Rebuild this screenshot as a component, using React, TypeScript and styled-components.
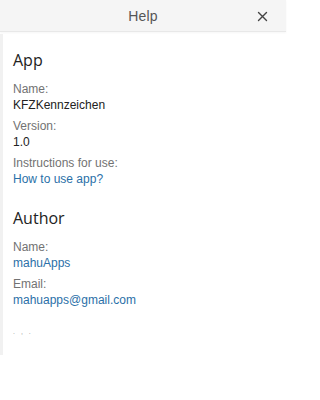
import React from 'react';
import styled, { createGlobalStyle } from 'styled-components';

const GlobalStyle = createGlobalStyle`
  html, body {
    margin: 0;
    padding: 0;
    background: #ffffff;
    font-family: "Liberation Sans", Arial, sans-serif;
    overflow-x: hidden;
  }
`;

const Screen = styled.div`
  width: 286px;
`;

const Header = styled.header`
  height: 32px;
  background: #f5f5f5;
  border-bottom: 1px solid #e8e8e8;
  box-shadow: 0 1px 2px rgba(0, 0, 0, 0.04);
  display: flex;
  align-items: center;
  justify-content: center;
  position: relative;
  box-sizing: border-box;
`;

const Title = styled.h1`
  margin: 0;
  font-size: 14px;
  font-weight: normal;
  color: #555555;
  letter-spacing: 0.2px;
`;

const CloseButton = styled.button`
  position: absolute;
  right: 16px;
  top: 7px;
  border: none;
  background: transparent;
  padding: 0;
  width: 16px;
  height: 18px;
  display: flex;
  align-items: center;
  justify-content: center;
  cursor: pointer;
`;

const Content = styled.main`
  margin-top: 2px;
  min-height: 321px;
  border-left: 3px solid #f1f1f1;
  background: #ffffff;
  padding: 14px 10px 0 10px;
  box-sizing: border-box;
`;

const Section = styled.section<{ first?: boolean }>`
  margin-top: ${({ first }) => (first ? '0' : '19px')};
  display: flex;
  flex-direction: column;
  gap: 5px;
`;

const Heading = styled.h2`
  margin: 0 0 4px 0;
  font-family: "Open Sans", "Liberation Sans", sans-serif;
  font-size: 16px;
  line-height: 24px;
  font-weight: normal;
  color: #222222;
`;

const Field = styled.div`
  display: flex;
  flex-direction: column;
`;

const Label = styled.span`
  font-size: 12px;
  line-height: 16px;
  color: #727272;
`;

const Value = styled.span`
  font-size: 12px;
  line-height: 16px;
  color: #222222;
`;

const Link = styled.a`
  font-size: 12px;
  line-height: 16px;
  color: #2a70a8;
  text-decoration: none;
`;

const Footnote = styled.div`
  margin-top: 20px;
  font-size: 7px;
  color: #9a9a9a;
  letter-spacing: 2px;
`;

const CloseIcon = () => (
  <svg width="11" height="11" viewBox="0 0 11 11">
    <path d="M1.5 1.5 L9.5 9.5 M9.5 1.5 L1.5 9.5" stroke="#444" strokeWidth="1.4" strokeLinecap="round" />
  </svg>
);

export default function App() {
  return (
    <Screen>
      <GlobalStyle />
      <Header>
        <Title>Help</Title>
        <CloseButton aria-label="Close">
          <CloseIcon />
        </CloseButton>
      </Header>
      <Content>
        <Section first>
          <Heading>App</Heading>
          <Field>
            <Label>Name:</Label>
            <Value>KFZKennzeichen</Value>
          </Field>
          <Field>
            <Label>Version:</Label>
            <Value>1.0</Value>
          </Field>
          <Field>
            <Label>Instructions for use:</Label>
            <Link href="#">How to use app?</Link>
          </Field>
        </Section>
        <Section>
          <Heading>Author</Heading>
          <Field>
            <Label>Name:</Label>
            <Link href="#">mahuApps</Link>
          </Field>
          <Field>
            <Label>Email:</Label>
            <Link href="#">mahuapps@gmail.com</Link>
          </Field>
        </Section>
        <Footnote>. , .</Footnote>
      </Content>
    </Screen>
  );
}
